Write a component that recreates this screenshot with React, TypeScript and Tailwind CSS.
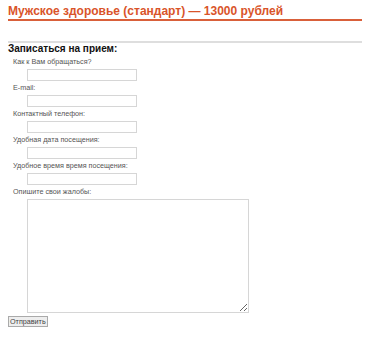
const fields = [
  "Как к Вам обращаться?",
  "E-mail:",
  "Контактный телефон:",
  "Удобная дата посещения:",
  "Удобное время время посещения:",
];

export default function App() {
  return (
    <div
      className="w-[382px] h-[350px] bg-white overflow-hidden"
      style={{ fontFamily: "'Liberation Sans', Arial, sans-serif" }}
    >
      <div className="ml-[8px] w-[354px]">
        {/* Title */}
        <div className="pt-[3px] h-[21px] border-b-2 border-[#d9603a]">
          <h1 className="text-[12px] leading-[16px] font-bold text-[#d9542a]">
            Мужское здоровье (стандарт) — 13000 рублей
          </h1>
        </div>

        <div className="mt-[20px] h-[2px] bg-[#dedede]" />

        <h2 className="text-[10px] leading-[12px] font-bold text-[#111]">
          Записаться на прием:
        </h2>

        <form className="mt-[2px]" onSubmit={(e) => e.preventDefault()}>
          {fields.map((f) => (
            <div key={f} className="h-[26px]">
              <div className="ml-[5px] h-[10px] text-[7.2px] leading-[10px] text-[#555]">
                {f}
              </div>
              <input
                type="text"
                className="mt-[2px] ml-[19px] block w-[110px] h-[12px] border border-[#d6d6d6] bg-white"
              />
            </div>
          ))}
          <div className="ml-[5px] h-[10px] text-[7.2px] leading-[10px] text-[#555]">
            Опишите свои жалобы:
          </div>
          <textarea className="mt-[2px] ml-[19px] block w-[222px] h-[114px] border border-[#d6d6d6] bg-white" />
          <button
            type="submit"
            className="mt-[3px] block h-[11px] px-[1px] border border-[#aaa] bg-[#eee] text-[7.2px] leading-[9px] text-[#444]"
          >
            Отправить
          </button>
        </form>
      </div>
    </div>
  );
}
